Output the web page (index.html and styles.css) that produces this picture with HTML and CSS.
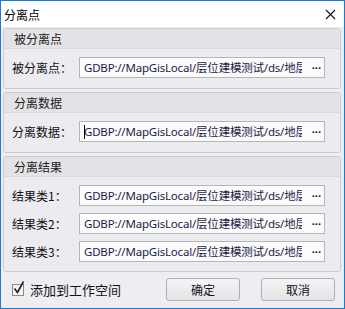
FILE: index.html
```html
<!DOCTYPE html>
<html lang="zh-CN">
<head>
  <meta charset="UTF-8" />
  <title>分离点</title>
  <link rel="stylesheet" href="styles.css">
</head>
<body>
  <div class="window">
    <div class="titlebar">
      <span class="title">分离点</span>
      <svg class="close" width="11" height="11" viewBox="0 0 11 11">
        <path d="M1 1 L10 10 M10 1 L1 10" stroke="#111" stroke-width="1.1" fill="none"/>
      </svg>
    </div>

    <div class="content">
      <div class="group">
        <div class="group-head">被分离点</div>
        <div class="group-body">
          <div class="row">
            <span class="label">被分离点：</span>
            <div class="field">
              <span class="value">GDBP://MapGisLocal/层位建模测试/ds/地层</span>
              <span class="more">···</span>
            </div>
          </div>
        </div>
      </div>

      <div class="group">
        <div class="group-head">分离数据</div>
        <div class="group-body">
          <div class="row">
            <span class="label">分离数据：</span>
            <div class="field">
              <span class="value"><i class="caret"></i>GDBP://MapGisLocal/层位建模测试/ds/地层</span>
              <span class="more">···</span>
            </div>
          </div>
        </div>
      </div>

      <div class="group">
        <div class="group-head">分离结果</div>
        <div class="group-body results">
          <div class="row">
            <span class="label">结果类1：</span>
            <div class="field">
              <span class="value">GDBP://MapGisLocal/层位建模测试/ds/地层</span>
              <span class="more">···</span>
            </div>
          </div>
          <div class="row">
            <span class="label">结果类2：</span>
            <div class="field">
              <span class="value">GDBP://MapGisLocal/层位建模测试/ds/地层</span>
              <span class="more">···</span>
            </div>
          </div>
          <div class="row">
            <span class="label">结果类3：</span>
            <div class="field">
              <span class="value">GDBP://MapGisLocal/层位建模测试/ds/地层</span>
              <span class="more">···</span>
            </div>
          </div>
        </div>
      </div>

      <div class="footer">
        <label class="check">
          <span class="box">
            <svg width="14" height="15" viewBox="0 0 14 15">
              <path d="M2.5 8.5 L5.5 12.5 L11.5 1.5" stroke="#222" stroke-width="1.6" fill="none"/>
            </svg>
          </span>
          <span>添加到工作空间</span>
        </label>
        <button class="button">确定</button>
        <button class="button">取消</button>
      </div>
    </div>
  </div>
</body>
</html>
```

FILE: styles.css
```css
body {
  margin: 0;
  font-family: "Noto Sans", "Noto Sans CJK SC", sans-serif;
  font-size: 12px;
  color: #1a1a1a;
}

.window {
  width: 345px;
  height: 309px;
  box-sizing: border-box;
  border: 1px solid #1b7bd0;
  background: #eeeef2;
  display: flex;
  flex-direction: column;
}

.titlebar {
  height: 26px;
  background: #fff;
  display: flex;
  align-items: center;
  justify-content: space-between;
  padding: 0 8px 0 3px;
}

.title {
  font-family: "Noto Sans CJK SC", sans-serif;
  font-size: 12px;
  color: #000;
}

.close {
  margin-top: 1px;
}

.content {
  display: flex;
  flex-direction: column;
  padding: 1px 3px 0 2px;
}

.group {
  border: 1px solid #cbcbd0;
  border-radius: 3px;
  background: #ececf0;
  margin-bottom: 3px;
}

.group-head {
  height: 19px;
  line-height: 19px;
  padding-left: 10px;
  background: #e2e2e7;
  border-bottom: 1px solid #d9d9de;
  font-family: "Noto Sans CJK SC", sans-serif;
  color: #222;
  border-radius: 2px 2px 0 0;
}

.group-body {
  padding: 8px 0 10px 8px;
}

.results {
  padding-top: 8px;
  padding-bottom: 9px;
  display: flex;
  flex-direction: column;
  gap: 7px;
}

.row {
  display: flex;
  align-items: center;
}

.label {
  width: 67px;
  font-family: "Noto Sans CJK SC", sans-serif;
  color: #111;
}

.field {
  width: 240px;
  height: 19px;
  border: 1px solid #b4b6bc;
  background: #fbfbfc;
  display: flex;
  align-items: center;
  padding-left: 4px;
}

.value {
  width: 218px;
  overflow: hidden;
  white-space: nowrap;
  font-size: 11.5px;
  letter-spacing: -0.2px;
  color: #1c1c48;
  line-height: 19px;
  position: relative;
}

.caret {
  position: absolute;
  left: 0;
  top: 3px;
  width: 1px;
  height: 14px;
  background: #000;
}

.more {
  margin-left: auto;
  padding-right: 3px;
  font-size: 11px;
  font-weight: bold;
  color: #111;
  line-height: 19px;
}

.footer {
  display: flex;
  align-items: center;
  margin-top: 3px;
  padding-left: 9px;
}

.check {
  display: flex;
  align-items: center;
  font-family: "Noto Sans CJK SC", sans-serif;
  font-size: 13px;
  color: #111;
  width: 154px;
}

.box {
  width: 10px;
  height: 10px;
  border: 1px solid #8a8a8a;
  background: #f4f4f4;
  position: relative;
  margin-right: 6px;
}

.box svg {
  position: absolute;
  left: -1px;
  top: -5px;
}

.button {
  width: 74px;
  height: 23px;
  margin-left: 21px;
  border: 1px solid #adadb2;
  border-radius: 3px;
  background: linear-gradient(#f4f4f6, #e4e4e8);
  font-family: "Noto Sans CJK SC", sans-serif;
  font-size: 12px;
  color: #111;
  padding: 0;
}

.check + .button {
  margin-left: 0;
}
```
